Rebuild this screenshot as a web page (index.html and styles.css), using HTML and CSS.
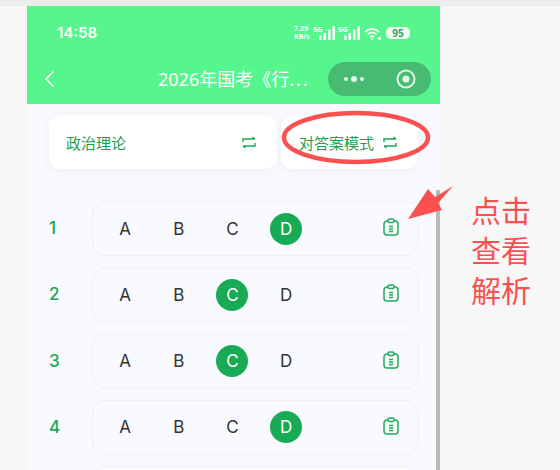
FILE: index.html
```html
<!DOCTYPE html>
<html lang="zh">
<head>
  <meta charset="UTF-8" />
  <title>对答案模式</title>
  <link rel="stylesheet" href="styles.css">
</head>
<body>
  <div class="stage">
    <div class="phone">
      <div class="header">
        <div class="status">
          <span class="time">14:58</span>
          <div class="status-right">
            <span class="speed">7.29<br>KB/s</span>
            <span class="net">5G</span>
            <svg class="bars" viewBox="0 0 17 14"><path d="M1 9.500h2.500V14H1zM5.500 7H8v7H5.500zM10 3.500h2.500V14H10zM14.500 0H17v14h-2.500z"/></svg>
            <span class="net net-2">5G</span>
            <svg class="bars" viewBox="0 0 17 14"><path d="M1 9.500h2.500V14H1zM5.500 7H8v7H5.500zM10 3.500h2.500V14H10zM14.500 0H17v14h-2.500z"/></svg>
            <svg class="wifi" viewBox="0 0 18 13"><path d="M1 5c4-4 10-4 14 0M3.500 7.500c2.600-2.500 6.400-2.500 9 0M6 10c1.300-1.200 2.700-1.200 4 0" fill="none" stroke="#fff" stroke-width="1.600"/><path d="M8 13l-1.500-1.500h3z" fill="#fff"/><circle cx="15.500" cy="11.500" r="1.400" fill="#fff"/></svg>
            <span class="battery">95</span>
          </div>
        </div>
        <div class="nav">
          <svg class="back" viewBox="0 0 11 18"><path d="M9.500 1.500L2 9l7.500 7.500" fill="none" stroke="#fff" stroke-width="1.500"/></svg>
          <span class="title">2026年国考《行<span class="more">...</span></span>
          <div class="capsule">
            <svg class="dots" viewBox="0 0 22 8"><circle cx="3" cy="4" r="2"/><circle cx="11" cy="4" r="3"/><circle cx="19" cy="4" r="2"/></svg>
            <svg class="target" viewBox="0 0 20 20"><circle cx="10" cy="10" r="8.500" fill="none" stroke="#e4f5ea" stroke-width="2"/><circle cx="10" cy="10" r="3.500" fill="#e4f5ea"/></svg>
          </div>
        </div>
      </div>

      <div class="content">
        <div class="tabs">
          <div class="tab tab-wide">
            <span>政治理论</span>
            <svg class="swap" viewBox="0 0 14 13"><path d="M1 6V3h12M10.500 1l2.500 2M13 7v3H1M3.500 12L1 10" fill="none" stroke="#1aa853" stroke-width="1.400"/></svg>
          </div>
          <div class="tab tab-mode">
            <span>对答案模式</span>
            <svg class="swap" viewBox="0 0 14 13"><path d="M1 6V3h12M10.500 1l2.500 2M13 7v3H1M3.500 12L1 10" fill="none" stroke="#1aa853" stroke-width="1.400"/></svg>
          </div>
        </div>

        <div class="list">
          <div class="row">
            <span class="num">1</span>
            <div class="answers">
              <span class="opt">A</span><span class="opt">B</span><span class="opt">C</span><span class="opt on">D</span>
              <svg class="clip" viewBox="0 0 16 18"><path d="M5 3H4a3 3 0 0 0-3 3v8a3 3 0 0 0 3 3h8a3 3 0 0 0 3-3V6a3 3 0 0 0-3-3h-1"/><rect x="5" y="1" width="6" height="3.500" rx="1.500"/><path d="M6 8.500h4M6 11h4M6 13.500h4"/></svg>
            </div>
          </div>
          <div class="row">
            <span class="num">2</span>
            <div class="answers">
              <span class="opt">A</span><span class="opt">B</span><span class="opt on">C</span><span class="opt">D</span>
              <svg class="clip" viewBox="0 0 16 18"><path d="M5 3H4a3 3 0 0 0-3 3v8a3 3 0 0 0 3 3h8a3 3 0 0 0 3-3V6a3 3 0 0 0-3-3h-1"/><rect x="5" y="1" width="6" height="3.500" rx="1.500"/><path d="M6 8.500h4M6 11h4M6 13.500h4"/></svg>
            </div>
          </div>
          <div class="row">
            <span class="num">3</span>
            <div class="answers">
              <span class="opt">A</span><span class="opt">B</span><span class="opt on">C</span><span class="opt">D</span>
              <svg class="clip" viewBox="0 0 16 18"><path d="M5 3H4a3 3 0 0 0-3 3v8a3 3 0 0 0 3 3h8a3 3 0 0 0 3-3V6a3 3 0 0 0-3-3h-1"/><rect x="5" y="1" width="6" height="3.500" rx="1.500"/><path d="M6 8.500h4M6 11h4M6 13.500h4"/></svg>
            </div>
          </div>
          <div class="row">
            <span class="num">4</span>
            <div class="answers">
              <span class="opt">A</span><span class="opt">B</span><span class="opt">C</span><span class="opt on">D</span>
              <svg class="clip" viewBox="0 0 16 18"><path d="M5 3H4a3 3 0 0 0-3 3v8a3 3 0 0 0 3 3h8a3 3 0 0 0 3-3V6a3 3 0 0 0-3-3h-1"/><rect x="5" y="1" width="6" height="3.500" rx="1.500"/><path d="M6 8.500h4M6 11h4M6 13.500h4"/></svg>
            </div>
          </div>
          <div class="row">
            <span class="num"></span>
            <div class="answers"></div>
          </div>
        </div>
      </div>
      <div class="scrollbar"></div>
    </div>

    <div class="note">点击<br>查看<br>解析</div>
  </div>

  <!-- red marks drawn over the screenshot -->
  <svg class="marks" viewBox="0 0 560 470">
    <ellipse cx="356" cy="137.500" rx="72" ry="24.500" fill="none" stroke="#fb5050" stroke-width="4.500"/>
    <path d="M453 186L438 203 442 210 408 219 428 189 435 197z" fill="#fb5050"/>
  </svg>
</body>
</html>
```

FILE: styles.css
```css
* {
  box-sizing: border-box;
}
html, body {
  margin: 0;
  height: 470px;
  overflow: hidden;
}
body {
  background: #f7f7f7;
  border-top: 6px solid #ececec;
  font-family: "Noto Sans", "Noto Sans CJK SC", sans-serif;
  position: relative;
}
.stage {
  display: flex;
  padding-left: 27px;
}
.phone {
  width: 413px;
  height: 464px;
  background: #f9faff;
  position: relative;
  overflow: hidden;
  flex: none;
}
.header {
  background: #57f58e;
  height: 98px;
  color: white;
}
.status {
  display: flex;
  justify-content: space-between;
  align-items: center;
  height: 41px;
  padding: 13px 30px 0 30px;
}
.time {
  font-family: Inter, sans-serif;
  font-size: 15px;
  font-weight: 600;
  line-height: 28px;
}
.status-right {
  display: flex;
  align-items: center;
}
.speed {
  font-size: 7px;
  font-weight: 700;
  line-height: 8px;
  width: 19px;
}
.net {
  font-size: 7.500px;
  font-weight: 700;
  line-height: 8px;
  align-self: flex-start;
  width: 11px;
  margin-right: -6px;
}
.net-2 {
  margin-left: 3px;
}
.bars {
  width: 17px;
  height: 14px;
  fill: white;
}
.wifi {
  width: 18px;
  height: 13px;
  margin-left: 4px;
}
.battery {
  width: 24px;
  height: 12px;
  margin-left: 4px;
  background: #eafdf0;
  color: #3c9e60;
  border-radius: 5px;
  font-size: 10px;
  font-weight: 700;
  line-height: 12px;
  text-align: center;
}
.nav {
  display: flex;
  align-items: center;
  height: 34px;
  margin-top: 15px;
  padding: 0 9px 0 17px;
}
.back {
  width: 11px;
  height: 18px;
  flex: none;
}
.title {
  flex: 1;
  font-size: 18px;
  line-height: 34px;
  margin-left: 103px;
  white-space: nowrap;
}
.more {
  letter-spacing: 2px;
}
.capsule {
  width: 103px;
  height: 34px;
  border-radius: 17px;
  background: #48bb72;
  display: flex;
  align-items: center;
  justify-content: space-between;
  padding: 0 15px;
  flex: none;
}
.dots {
  width: 22px;
  height: 8px;
  fill: #e4f5ea;
}
.target {
  width: 20px;
  height: 20px;
}
.content {
  padding: 11px 21px 0 22px;
}
.tabs {
  display: flex;
  gap: 4px;
  height: 54px;
}
.tab {
  background: white;
  border-radius: 12px;
  box-shadow: 0 2px 8px rgba(60, 80, 120, 0.06);
  display: flex;
  align-items: center;
  justify-content: space-between;
  font-size: 15px;
  color: #1f9d55;
}
.tab-wide {
  width: 228px;
  padding: 0 21px 0 17px;
}
.tab-mode {
  width: 137px;
  padding: 0 21px 0 18px;
}
.swap {
  width: 14px;
  height: 13px;
  flex: none;
}
.list {
  margin-top: 32px;
  display: flex;
  flex-direction: column;
  gap: 11.300px;
}
.row {
  display: flex;
  align-items: center;
}
.num {
  width: 43px;
  font-family: Inter, sans-serif;
  font-size: 17px;
  font-weight: 500;
  color: #1aa853;
  flex: none;
  margin-top: -1px;
}
.answers {
  width: 327px;
  height: 55px;
  border: 1px solid #eef0f5;
  border-radius: 14px;
  display: flex;
  align-items: center;
  padding: 0 19px 0 16px;
}
.opt {
  width: 32px;
  height: 32px;
  margin-right: 21.700px;
  border-radius: 50%;
  font-family: Inter, sans-serif;
  font-size: 17px;
  color: #333;
  display: flex;
  align-items: center;
  justify-content: center;
}
.opt.on {
  background: #18aa54;
  color: white;
}
.clip {
  width: 16px;
  height: 18px;
  margin-left: auto;
  margin-bottom: 3px;
  fill: none;
  stroke: #1eae5a;
  stroke-width: 1.500;
}
.scrollbar {
  position: absolute;
  right: 0;
  top: 184px;
  bottom: 0;
  width: 4px;
  background: #bbbbbb;
}
.note {
  margin: 183px 0 0 31px;
  font-size: 30px;
  line-height: 40px;
  color: #fb5050;
  font-family: "Noto Sans CJK SC", sans-serif;
}
.marks {
  position: absolute;
  left: 0;
  top: -6px;
  width: 560px;
  height: 470px;
  pointer-events: none;
}
```
